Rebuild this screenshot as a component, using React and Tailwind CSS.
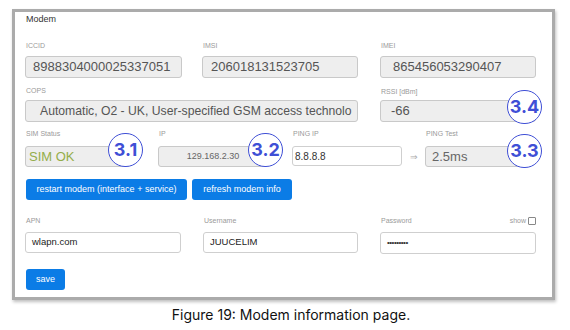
export default function App() {
  const ro = "h-full rounded-[3px] border border-[#c9c9c9] bg-[#eeeeee] flex items-center overflow-hidden whitespace-nowrap";
  const wr = "h-full rounded-[3px] border border-[#cfcfcf] bg-white flex items-center overflow-hidden whitespace-nowrap";
  const lbl = "h-[10px] leading-[10px] text-[7px] text-[#9a9a9a] pl-[1px] whitespace-nowrap";
  const circle = "absolute w-[35px] h-[34px] rounded-full border-[1.5px] border-[#3f4fd6] bg-white flex items-center justify-center text-[18px] font-bold text-[#3f4fd6] leading-none";
  return (
    <div className="relative w-[570px] h-[330px] bg-white overflow-hidden pt-[9px] pl-[12px]" style={{ fontFamily: '"Liberation Sans", Arial, sans-serif' }}>
      <div className="w-[543px] h-[291px] border-[3px] border-[#ababab] bg-white shadow-[1px_2px_3px_rgba(0,0,0,0.25)] pl-[10px]">
        <div className="text-[9px] leading-[14px] text-[#333] pl-[1px]">Modem</div>

        {/* Row 1 */}
        <div className="flex mt-[15px]">
          <div className="w-[157px]">
            <div className={lbl}>ICCID</div>
            <div className="mt-[5px] h-[22px]"><div className={ro + " pl-[7px] text-[13px] text-[#555]"}>8988304000025337051</div></div>
          </div>
          <div className="w-[156px] ml-[20px]">
            <div className={lbl}>IMSI</div>
            <div className="mt-[5px] h-[22px]"><div className={ro + " pl-[8px] text-[13px] text-[#555]"}>206018131523705</div></div>
          </div>
          <div className="w-[156px] ml-[22px]">
            <div className={lbl}>IMEI</div>
            <div className="mt-[5px] h-[22px]"><div className={ro + " pl-[12px] text-[13px] text-[#555]"}>865456053290407</div></div>
          </div>
        </div>

        {/* Row 2 */}
        <div className="flex mt-[8px]">
          <div className="w-[333px]">
            <div className={lbl}>COPS</div>
            <div className="mt-[4px] h-[22px]"><div className={ro + " pl-[14px] text-[12.2px] text-[#555]"}>Automatic, O2 - UK, User-specified GSM access technolo</div></div>
          </div>
          <div className="w-[156px] ml-[22px]">
            <div className={lbl + " mt-[1px]"}>RSSI [dBm]</div>
            <div className="mt-[3px] h-[22px]"><div className={ro + " pl-[10px] text-[13px] text-[#555]"}>-66</div></div>
          </div>
        </div>

        {/* Row 3 */}
        <div className="flex mt-[7px]">
          <div className="w-[105px]">
            <div className={lbl}>SIM Status</div>
            <div className="mt-[7px] h-[21px]"><div className={ro + " pl-[3px] text-[13px] text-[#94ad4a]"}>SIM OK</div></div>
          </div>
          <div className="w-[110px] ml-[28px]">
            <div className={lbl}>IP</div>
            <div className="mt-[7px] h-[21px]"><div className={ro + " justify-center text-[9px] text-[#666]"}>129.168.2.30</div></div>
          </div>
          <div className="w-[110px] ml-[24px]">
            <div className={lbl}>PING IP</div>
            <div className="mt-[7px] h-[20px]"><div className={wr + " pl-[2px] text-[10px] text-[#333]"}>8.8.8.8</div></div>
          </div>
          <div className="w-[23px] flex items-end justify-center pb-[3px] text-[9px] text-[#aaa]">⇒</div>
          <div className="w-[95px]">
            <div className={lbl}>PING Test</div>
            <div className="mt-[7px] h-[21px]"><div className={ro + " pl-[6px] text-[13px] text-[#666]"}>2.5ms</div></div>
          </div>
        </div>

        {/* Buttons */}
        <div className="flex mt-[12px]">
          <div className="ml-[1px] w-[161px] h-[21px] rounded-[3px] bg-[#0b7ce6] text-white text-[9px] flex items-center justify-center whitespace-nowrap">restart modem (interface + service)</div>
          <div className="ml-[5px] w-[100px] h-[21px] rounded-[3px] bg-[#0b7ce6] text-white text-[9px] flex items-center justify-center whitespace-nowrap">refresh modem info</div>
        </div>

        {/* Row 4 */}
        <div className="flex mt-[16px]">
          <div className="w-[156px]">
            <div className={lbl}>APN</div>
            <div className="mt-[6px] h-[21px]"><div className={wr + " pl-[6px] text-[9.5px] text-[#222]"}>wlapn.com</div></div>
          </div>
          <div className="w-[155px] ml-[22px]">
            <div className={lbl}>Username</div>
            <div className="mt-[6px] h-[21px]"><div className={wr + " pl-[6px] text-[9.5px] text-[#222]"}>JUUCELIM</div></div>
          </div>
          <div className="w-[156px] ml-[22px]">
            <div className="flex justify-between items-center h-[10px]">
              <div className="text-[7px] leading-[10px] text-[#9a9a9a] pl-[1px]">Password</div>
              <div className="flex items-center gap-[2px] text-[7px] leading-[10px] text-[#9a9a9a]">
                <span>show</span>
                <span className="w-[8px] h-[8px] border border-[#888] rounded-[1px] bg-white"></span>
              </div>
            </div>
            <div className="mt-[6px] h-[22px]"><div className={wr + " pl-[6px] text-[8px] text-[#333] tracking-[-0.5px]"}>•••••••••</div></div>
          </div>
        </div>

        {/* Save */}
        <div className="mt-[15px] ml-[1px] w-[39px] h-[21px] rounded-[3px] bg-[#0b7ce6] text-white text-[9px] flex items-center justify-center">save</div>
      </div>

      <div className="mt-[6px] text-center text-[14px] leading-[18px] text-[#111]" style={{ fontFamily: 'Inter, "Noto Sans", sans-serif' }}>
        Figure 19: Modem information page.
      </div>

      <div className={circle + " left-[108px] top-[133px]"} style={{ fontFamily: 'Inter, sans-serif' }}>3.1</div>
      <div className={circle + " left-[248px] top-[133px]"} style={{ fontFamily: 'Inter, sans-serif' }}>3.2</div>
      <div className={circle + " left-[507px] top-[134px]"} style={{ fontFamily: 'Inter, sans-serif' }}>3.3</div>
      <div className={circle + " left-[507px] top-[90px]"} style={{ fontFamily: 'Inter, sans-serif' }}>3.4</div>
    </div>
  );
}
